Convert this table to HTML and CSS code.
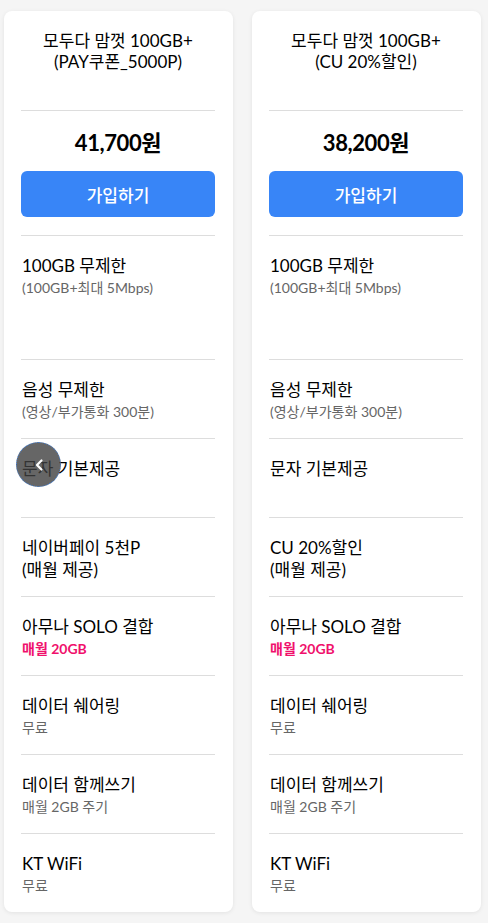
FILE: index.html
```html
<!DOCTYPE html>
<html lang="ko">
<head>
<meta charset="utf-8">
<link rel="stylesheet" href="styles.css">
</head>
<body>
<div class="cards">
  <div class="card">
    <div class="head">
      <div class="title">모두다 맘껏 100GB+<br>(PAY쿠폰_5000P)</div>
    </div>
    <div class="price-box">
      <div class="price">41,700원</div>
      <button class="join">가입하기</button>
    </div>
    <div class="row tall"><div class="main">100GB 무제한</div><div class="sub">(100GB+최대 5Mbps)</div></div>
    <div class="row"><div class="main">음성 무제한</div><div class="sub">(영상/부가통화 300분)</div></div>
    <div class="row"><div class="main">문자 기본제공</div></div>
    <div class="row"><div class="main">네이버페이 5천P<br>(매월 제공)</div></div>
    <div class="row"><div class="main">아무나 SOLO 결합</div><div class="sub pink">매월 20GB</div></div>
    <div class="row"><div class="main">데이터 쉐어링</div><div class="sub">무료</div></div>
    <div class="row"><div class="main">데이터 함께쓰기</div><div class="sub">매월 2GB 주기</div></div>
    <div class="row last"><div class="main">KT WiFi</div><div class="sub">무료</div></div>
  </div>
  <div class="card">
    <div class="head">
      <div class="title">모두다 맘껏 100GB+<br>(CU 20%할인)</div>
    </div>
    <div class="price-box">
      <div class="price">38,200원</div>
      <button class="join">가입하기</button>
    </div>
    <div class="row tall"><div class="main">100GB 무제한</div><div class="sub">(100GB+최대 5Mbps)</div></div>
    <div class="row"><div class="main">음성 무제한</div><div class="sub">(영상/부가통화 300분)</div></div>
    <div class="row"><div class="main">문자 기본제공</div></div>
    <div class="row"><div class="main">CU 20%할인<br>(매월 제공)</div></div>
    <div class="row"><div class="main">아무나 SOLO 결합</div><div class="sub pink">매월 20GB</div></div>
    <div class="row"><div class="main">데이터 쉐어링</div><div class="sub">무료</div></div>
    <div class="row"><div class="main">데이터 함께쓰기</div><div class="sub">매월 2GB 주기</div></div>
    <div class="row last"><div class="main">KT WiFi</div><div class="sub">무료</div></div>
  </div>
</div>
<button class="prev" aria-label="이전">
  <svg width="12" height="14" viewBox="0 0 12 14"><path d="M8.5 2.5 L4 7 L8.5 11.5" fill="none" stroke="#fff" stroke-width="2.2" stroke-linecap="round" stroke-linejoin="round"/></svg>
</button>
</body>
</html>
```
FILE: styles.css
```css
* { box-sizing: border-box; }
html, body { margin: 0; padding: 0; }
body {
  background: #f5f5f5;
  font-family: "Lato", "Noto Sans CJK KR", sans-serif;
  color: #000;
  width: 488px;
  height: 923px;
  overflow: hidden;
  position: relative;
}
.cards {
  display: flex;
  gap: 19px;
  padding: 11px 0 0 4px;
}
.card {
  width: 229px;
  background: #fff;
  border-radius: 8px;
  box-shadow: 0 1px 4px rgba(0,0,0,0.08);
  padding: 0 18px 0 17px;
}
.head {
  height: 100px;
  padding-top: 19px;
  text-align: center;
  border-bottom: 1px solid #ddd;
}
.title {
  font-size: 17px;
  line-height: 21px;
}
.price-box {
  height: 125px;
  padding-top: 19px;
  border-bottom: 1px solid #ddd;
  text-align: center;
}
.price {
  font-size: 22px;
  font-weight: 700;
  line-height: 26px;
  letter-spacing: -0.4px;
}
.join {
  display: block;
  width: 100%;
  height: 46px;
  margin-top: 15px;
  border: 0;
  border-radius: 6px;
  background: #3885f7;
  color: #fff;
  font-family: inherit;
  font-size: 17px;
  font-weight: 500;
}
.row {
  height: 79px;
  padding: 19px 1px 0;
  border-bottom: 1px solid #ddd;
}
.row.tall { height: 124px; }
.row.last { border-bottom: 0; height: 78px; }
.main {
  font-size: 17px;
  line-height: 22px;
}
.sub {
  font-size: 14px;
  line-height: 22px;
  color: #666;
}
.sub.pink {
  color: #f0106c;
  font-weight: 700;
}
.prev {
  position: absolute;
  left: 16px;
  top: 442px;
  width: 45px;
  height: 45px;
  border-radius: 50%;
  border: 1px dotted #3a7bd5;
  background: rgba(64,64,64,0.8);
  padding: 0;
  display: flex;
  align-items: center;
  justify-content: center;
}
```
